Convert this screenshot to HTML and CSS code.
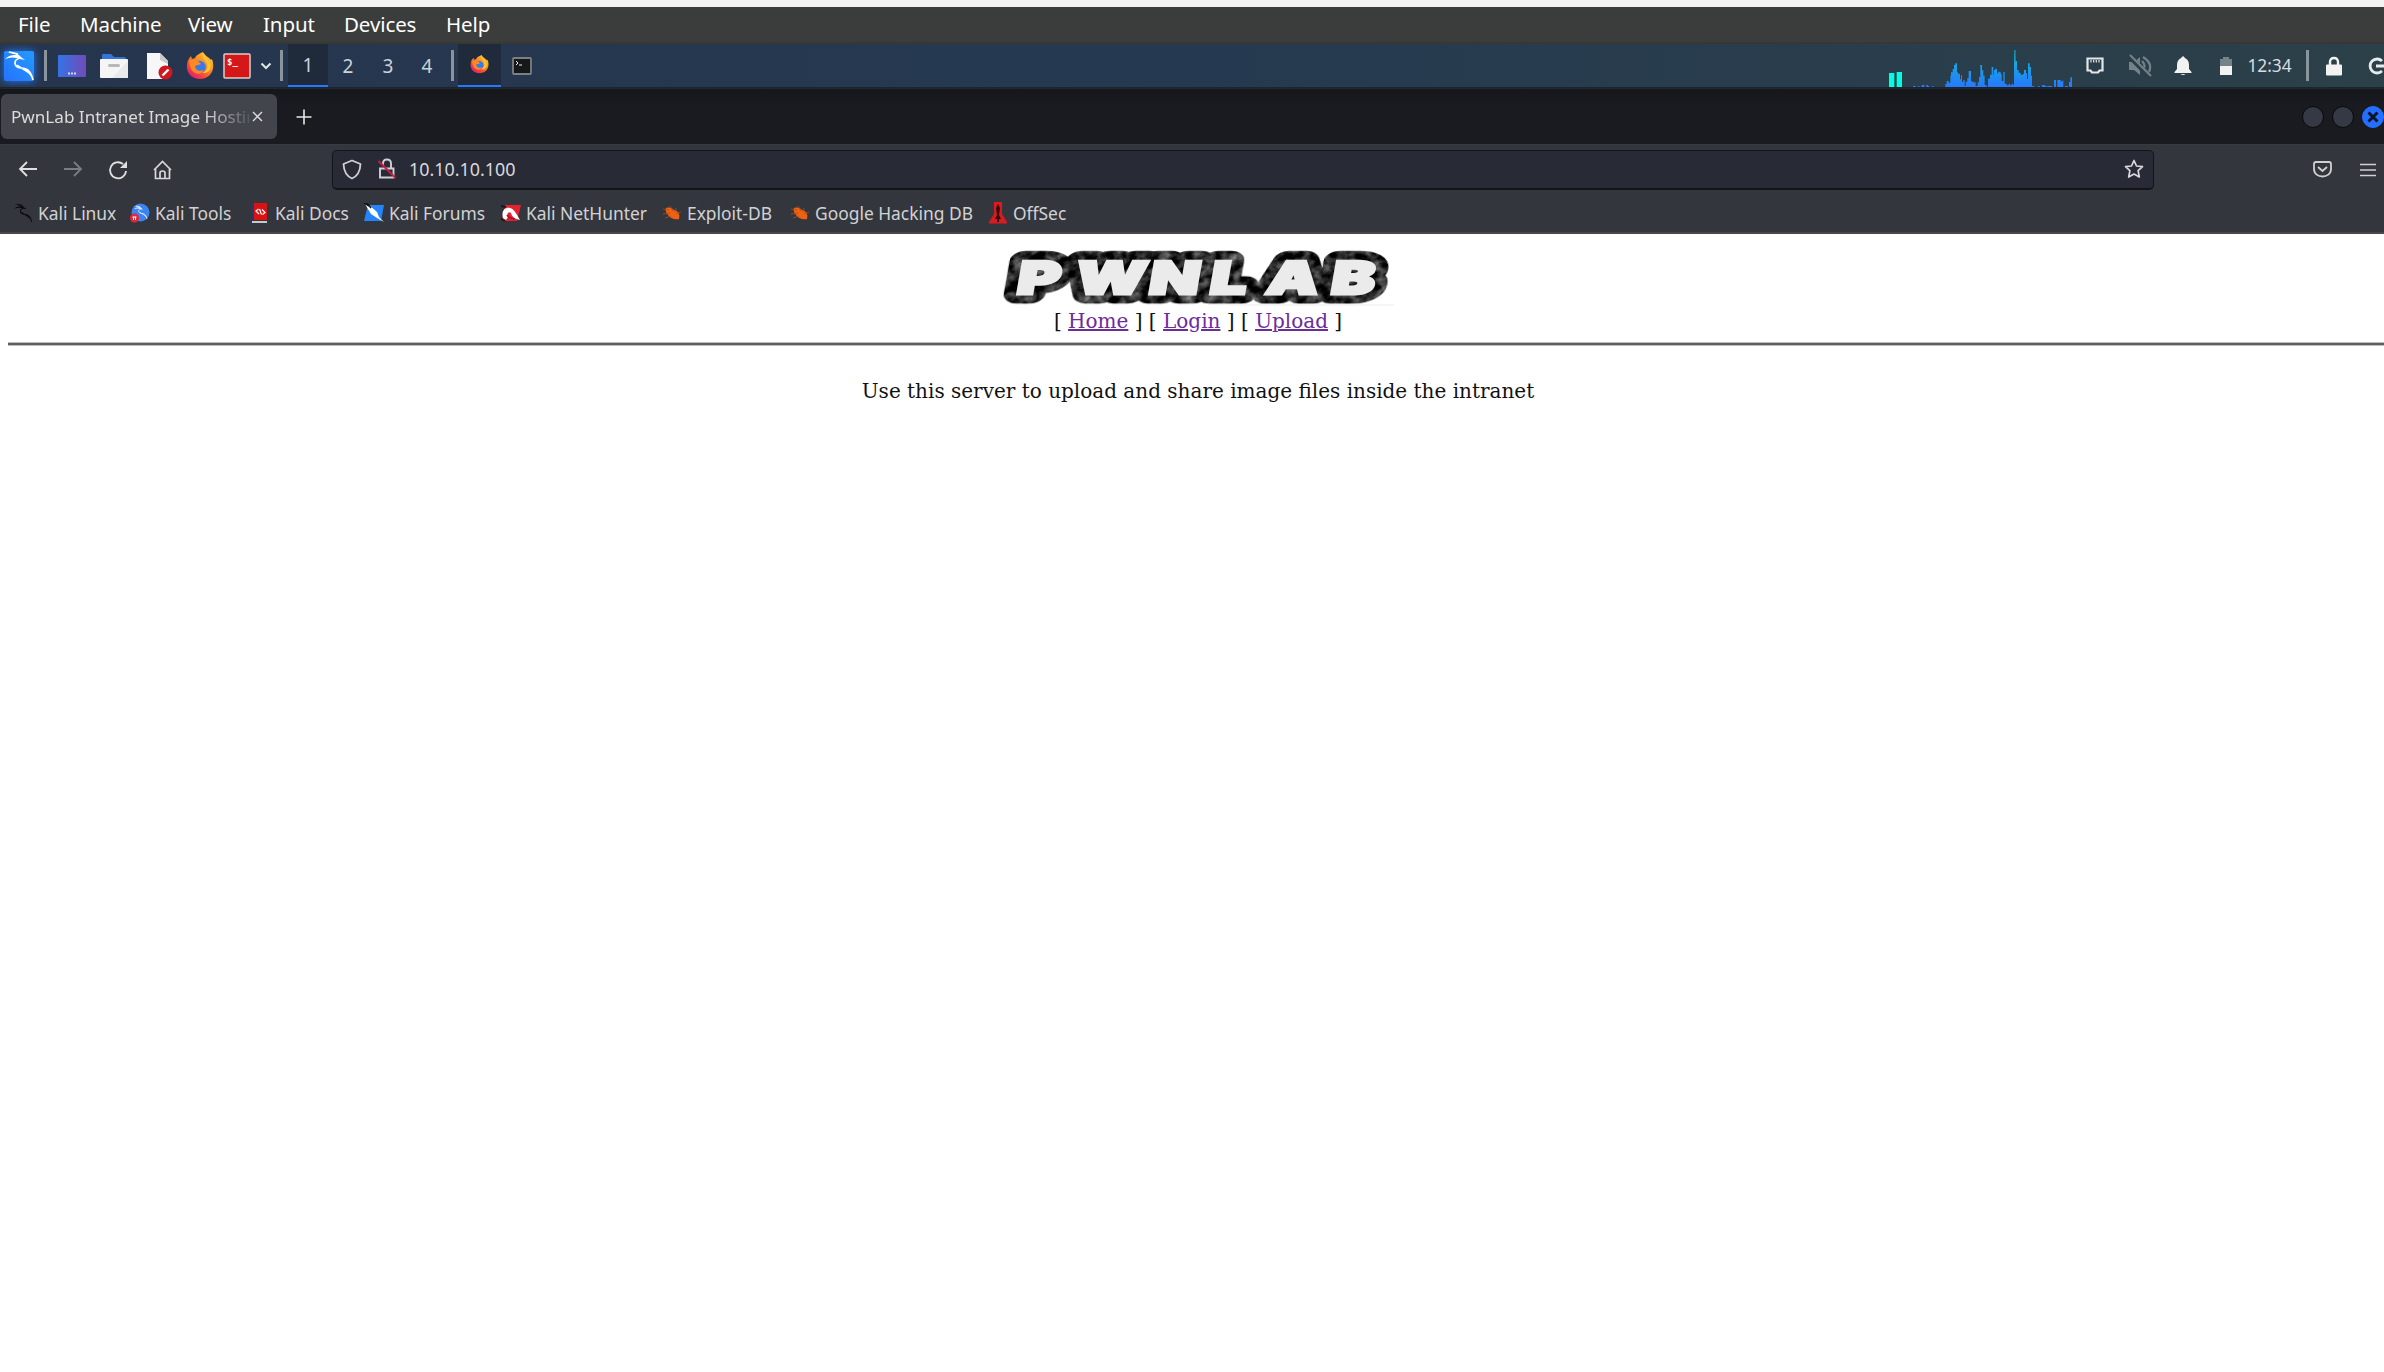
FILE: index.html
```html
<!DOCTYPE html>
<html lang="en">
<head>
<meta charset="utf-8">
<title>PwnLab Intranet Image Hosting</title>
<link rel="stylesheet" href="styles.css">
</head>
<body>
<svg class="defs" width="0" height="0">
  <defs>
    <symbol id="dragon" viewBox="0 0 32 32">
      <path d="M1 3C8 1 15 3 18 7L22 10L17 9C12 7 7 7 2 9C6 5 10 5 14 5C9 3 5 2 1 3Z" fill="currentColor"/>
      <path d="M18 8C10 9 10 17 18 18C25 18 28 22 30 30M14 15C18 19 26 20 29 27M6 2L15 4" fill="none" stroke="currentColor" stroke-width="1.700"/>
    </symbol>
    <linearGradient id="fire" x1="1" y1="0" x2=".2" y2="1"><stop offset="0" stop-color="#ffe53b"/><stop offset=".45" stop-color="#ff8a25"/><stop offset=".8" stop-color="#f23b45"/><stop offset="1" stop-color="#e31587"/></linearGradient>
    <symbol id="firefox" viewBox="0 0 28 28">
      <path d="M17 0C19 4 23 5 25 8L26 7C30 18 24 27 14 27C5 27 0 20 1 13C1 9 3 6 5 4L6 7L9 6C10 3 13 2 17 0Z" fill="url(#fire)"/>
      <circle cx="13.500" cy="15" r="6.200" fill="#3978e8"/>
      <path d="M3 9C7 6 12 8 15 12C13 13 11 13 9 14C9 18 13 20 18 18C14 25 5 21 4 14Z" fill="#ff8a24"/>
      <path d="M17 1C15 7 23 9 21 16C20 19 18 20 16 21C25 22 27 14 22 8Z" fill="#ffc52d"/>
    </symbol>
    <symbol id="bug" viewBox="0 0 20 20">
      <path d="M4 5C8 4 10 5 12 7C17 8 18 12 17 16C12 17 8 15 6 12C4 10 3 7 4 5Z" fill="#f0600f"/>
      <path d="M1 6L7 7M1 11L8 10M3 15L9 13M8 3L11 8M14 5L13 9M19 9L14 11" stroke="#a64e20" stroke-width=".8"/>
    </symbol>
  </defs>
</svg>
<div class="strip"></div>
<nav class="vm-menu"><span>File</span><span>Machine</span><span>View</span><span>Input</span><span>Devices</span><span>Help</span></nav>

<header class="panel">
  <div class="launchers">
    <div><svg class="kali" width="32" height="32" viewBox="0 0 32 32"><defs><linearGradient id="kb" x1="1" y1="0" x2="0" y2="1"><stop stop-color="#249aff"/><stop offset="1" stop-color="#2573ff"/></linearGradient></defs><rect x="1" y="1" width="30" height="30" rx="2" fill="url(#kb)"/><use href="#dragon" width="32" height="32" color="#fff"/></svg></div>
    <div><i class="sep"></i></div>
    <div><svg width="28" height="22"><defs><linearGradient id="mon" x2="1"><stop stop-color="#3573e5"/><stop offset="1" stop-color="#704cb8"/></linearGradient></defs><rect width="28" height="22" rx="1" fill="url(#mon)"/><path d="M10 18.500H18" stroke="#d9d5ef" stroke-width="2" stroke-dasharray="2 1"/></svg></div>
    <div><svg width="28" height="26"><path d="M2 2Q2 1 3 1H11L14 4H24Q26 4 26 6V12H2Z" fill="#3674dc"/><rect y="6" width="28" height="19" rx="1" fill="#f5f5f5"/><path d="M28 8V25H12Z" fill="#e9e9e9"/><rect x="8" y="11" width="12" height="3" rx="1.500" fill="#b8b8b8"/></svg></div>
    <div><svg width="27" height="28"><path d="M1 1H14L22 9V27H1Z" fill="#f7f7f7"/><path d="M14 1V8L22 12V9Z" fill="#c9c9c9"/><circle cx="19.500" cy="20.500" r="7" fill="#cf171d"/><path d="M16.500 23.500L22.500 17.500" stroke="#fff" stroke-width="2.400"/></svg></div>
    <div><svg width="28" height="28"><use href="#firefox" width="28" height="28"/></svg></div>
    <div><svg width="28" height="26"><rect x="1" y="1" width="26" height="24" rx="1" fill="#d51717" stroke="#d8cfcc" stroke-width="1.500"/><text x="4" y="12" class="prompt">$_</text></svg></div>
    <div><svg width="12" height="8" fill="none" stroke="#e3e6e9" stroke-width="2"><path d="M1.500 1.500L6 6L10.500 1.500"/></svg></div>
    <div><i class="sep"></i></div>
    <div class="ws on">1</div><div class="ws">2</div><div class="ws">3</div><div class="ws">4</div>
    <div><i class="sep"></i></div>
    <div class="on"><svg width="19" height="19"><use href="#firefox" width="19" height="19"/></svg></div>
    <div><svg width="20" height="18"><rect x="1" y="1" width="18" height="16" rx="1" fill="#171819" stroke="#7c7f83" stroke-width="1.800"/><path d="M4 4L6 6L4 8M7 8H10" stroke="#eee" fill="none"/></svg></div>
  </div>
  <div class="tray">
    <svg width="192" height="44" viewBox="60 42 576 132"><defs><linearGradient id="cpu" gradientUnits="userSpaceOnUse" x1="0" y1="60" x2="0" y2="174"><stop stop-color="#128e98"/><stop offset=".38" stop-color="#17a5e3"/><stop offset="1" stop-color="#2777ff"/></linearGradient></defs><path d="M87 129H103V174H87ZM110 126H126V174H110Z" fill="#00ffe0"/><path d="M159 174V168H167V174H174V168H178V174H185V165H193V174H199V165H204V168H208V174H216V168H220V174H256V162H260V153H266V158H271V138H273V127H278V117H282V105H286V100H291V127H294V131H300V148H303V136H306V156H310V150H314V168H317V155H322V144H326V123H333V153H337V157H347V168H353V157H357V141H361V105H366V121H370V137H374V165H380V171H384V146H390V134H395V111H400V134H402V120H406V116H411V130H415V125H422V132H425V153H430V126H434V161H440V166H446V161H450V166H455V161H459V165H462V60H467V93H471V120H476V128H482V134H489V131H492V120H498V130H501V147H504V100H509V111H513V137H516V168H523V174H534V168H539V174H546V165H555V168H560V171H562V168H576V174H582V150H588V174H592V150H602V155H605V152H610V171H615V168H624V174H627V156H631V142H636V174Z" fill="url(#cpu)"/></svg>
    <div class="t-net"><svg width="18" height="17" fill="none" stroke="#e3e6e8" stroke-width="2.200"><path d="M1.500 1.500H16.500V13.500H13.500L12 15.500H6L4.500 13.500H1.500Z"/><path d="M5 3V5.500M7.700 3V5.500M10.300 3V5.500M13 3V5.500" stroke-width="1.200"/></svg></div>
    <div class="t-mute"><svg width="24" height="24" fill="none" stroke="#75828a" stroke-width="2.200"><path d="M1 8H6L12 3V21L6 16H1Z" fill="#75828a" stroke="none"/><path d="M14 7Q19 12 14 17M15 3Q25 9 21 18"/><path d="M1 2L22 23" stroke="#2b3d49" stroke-width="5"/><path d="M2 1L23 22"/></svg></div>
    <div class="t-bell"><svg width="18" height="20" fill="#f2f2f0"><path d="M9 0L11 2Q15 4 15 9V13L17.500 16V17H.5V16L3 13V9Q3 4 7 2ZM6.500 18H11.500Q9 20 6.500 18Z"/></svg></div>
    <div class="t-bat"><svg width="14" height="18"><path d="M4 0H10V2H13V9H1V2H4Z" fill="#75828a"/><path d="M1 9H13V18H1Z" fill="#f2f2f0"/></svg></div>
    <div class="clock">12:34</div>
    <div class="t-sep"><i class="sep"></i></div>
    <div class="t-lock"><svg width="18" height="20"><rect x="1" y="8.500" width="16" height="11" rx="1" fill="#f2f2f0"/><path d="M5 9V6Q5 2 9 2T13 6V9" fill="none" stroke="#f2f2f0" stroke-width="2.400"/></svg></div>
    <div class="t-out"><svg width="17" height="20" fill="none" stroke="#e7ebec" stroke-width="2.800"><path d="M15 5A7 7 0 1 0 15 15M9 10H17"/></svg></div>
  </div>
</header>

<div class="tabs">
  <div class="tab"><span class="title">PwnLab Intranet Image Hosting</span><svg width="11" height="11" stroke="#ddd" stroke-width="1.400"><path d="M1 1L10 10M10 1L1 10"/></svg></div>
  <svg class="plus" width="16" height="16" stroke="#e7e7e7" stroke-width="1.600"><path d="M8 .5V15.500M.5 8H15.500"/></svg>
  <div class="win"><i></i><i></i><i class="x"><svg width="12" height="12" stroke="#08152c" stroke-width="3"><path d="M1.500 1.500L10.500 10.500M10.500 1.500L1.500 10.500"/></svg></i></div>
</div>

<div class="toolbar">
  <div class="navs">
    <svg width="20" height="18" fill="none" stroke="#e0e0e1" stroke-width="1.800"><path d="M19 9H2M9 2L2 9L9 16"/></svg>
    <svg width="20" height="18" fill="none" stroke="#7a7c82" stroke-width="1.800"><path d="M1 9H18M11 2L18 9L11 16"/></svg>
    <svg width="20" height="20" fill="none" stroke="#e0e0e1" stroke-width="1.800"><path d="M18 11A8 8 0 1 1 15 4"/><path d="M19 1V8H12Z" fill="#e0e0e1" stroke="none"/></svg>
    <svg width="20" height="20" fill="none" stroke="#d8d8d9" stroke-width="1.700"><path d="M1 10L9.500 1.500L18 10M2.500 9V18.500H16.500V9M7 18V13Q7 11 9.500 11T12 13V18"/></svg>
  </div>
  <div class="url">
    <svg width="20" height="21" fill="none" stroke="#d0d0d4" stroke-width="1.800"><path d="M10 1.500L18.500 5Q18 16 10 19.500Q2 16 1.500 5Z" stroke-linejoin="round"/></svg>
    <svg class="insecure" width="20" height="22" fill="none" stroke="#d0d0d4" stroke-width="1.900"><path d="M6 7V5.500Q6 1.500 10 1.500T14 5.500V10M3 10.500H16.500V19.500H3Z"/><path d="M1.500 3L18.500 20" stroke="#c51d49"/></svg>
    <span>10.10.10.100</span>
    <svg class="star" width="20" height="20" fill="none" stroke="#d8d8da" stroke-width="1.700" stroke-linejoin="round"><path d="M10 1.500L12.500 7L18.500 7.700L14.100 11.700L15.300 18L10 15L4.700 18L5.900 11.700L1.500 7.700L7.500 7Z"/></svg>
  </div>
  <svg class="pocket" width="19" height="17" fill="none" stroke="#d0d0d2" stroke-width="1.800"><path d="M1 3Q1 1 3 1H16Q18 1 18 3V8C18 18 1 18 1 8ZM5 6L9.500 10L14 6"/></svg>
  <svg class="burger" width="16" height="14" stroke="#d0d0d2" stroke-width="1.700"><path d="M0 1.500H16M0 7H16M0 12.500H16"/></svg>
</div>
<div class="bookmarks">
  <a><svg width="20" height="20"><use href="#dragon" width="20" height="20" color="#0b0b0c"/></svg>Kali Linux</a>
  <a><svg width="20" height="20"><circle cx="10.500" cy="9.500" r="9" fill="#3d83f3"/><use href="#dragon" x="3" y="2" width="15" height="15" color="#e7f0ff"/><circle cx="4.500" cy="15" r="4.500" fill="#e32638"/><path d="M2.500 14H6.500M3.500 14V17M5.500 14V17" stroke="#fff"/></svg>Kali Tools</a>
  <a><svg width="20" height="20"><path d="M2 1H4V18H2Z" fill="#27366b"/><path d="M4 0H17V17H4Z" fill="#d91313"/><path d="M2 18H17V20H2Z" fill="#c9c9cb"/><path d="M8.500 6L6 8L9 11M12.500 11.500L15 9.500L12 6.500M9.500 6L11.500 11.500" stroke="#fff" stroke-width="1.200" fill="none"/></svg>Kali Docs</a>
  <a><svg width="20" height="20"><path d="M4 2H20L17 18H0Z" fill="#2384fb"/><path d="M1 1L5 2L13 9L15 14L20 19L13 15L7 11Z" fill="#fff"/><path d="M0 0L5 3M3 0L7 5" stroke="#111" stroke-width="1.500"/></svg>Kali Forums</a>
  <a><svg width="20" height="20" fill="none"><path d="M4 2H20L16 18H1Z" fill="#e32332"/><path d="M2 15C0 8 4 4 9 5C13 6 15 10 19 17C14 16 11 14 10 10C8 8 5 11 7 14L5 17Z" fill="#fff"/><path d="M6 12C8 15 11 16 14 16" stroke="#a70d2c" stroke-width="1.500"/><path d="M0 3L5 4M0 16L4 18" stroke="#17171a" stroke-width="1.800"/></svg>Kali NetHunter</a>
  <a><svg width="20" height="20"><use href="#bug" width="20" height="20"/></svg>Exploit-DB</a>
  <a><svg width="20" height="20"><use href="#bug" width="20" height="20"/></svg>Google Hacking DB</a>
  <a><svg width="19" height="22"><path d="M5 0H13V12L18 20V21.500H0V20L5 12Z" fill="#d91a20"/><path d="M9 2L11 6L10 13L12 17H10V20H8V17H6L8 13L7 6Z" fill="#330b0c"/></svg>OffSec</a>
</div>

<main class="page">
  <svg class="logo" width="400" height="58" viewBox="0 0 400 58">
    <defs>
      <filter id="marble" x="-5%" y="-30%" width="110%" height="160%" color-interpolation-filters="sRGB">
        <feTurbulence type="fractalNoise" baseFrequency=".13 .1" numOctaves="4" seed="7"/>
        <feColorMatrix values="1 0 0 0 -.35 1 0 0 0 -.35 1 0 0 0 -.35 0 0 0 0 1"/>
        <feComposite operator="in" in2="SourceGraphic"/>
      </filter>
    </defs>
    <g transform="translate(10 44.500) skewX(-10) scale(1.450 1)">
      <text x="5 45 96 138 177 221.500" class="rim" filter="url(#marble)">PWNLAB</text>
      <text x="5 45 96 138 177 221.500" class="face" aria-hidden="true">PWNLAB</text>
    </g>
    <path d="M230 56H396" stroke="#f3f3f3" stroke-width="1.500"/>
  </svg>
  <div class="links">[ <a>Home</a> ] [ <a>Login</a> ] [ <a>Upload</a> ]</div>
  <hr>
  <p>Use this server to upload and share image files inside the intranet</p>
</main>
</body>
</html>
```

FILE: styles.css
```css
* { box-sizing: border-box; }
html, body { margin: 0; height: 100%; overflow: hidden; }
body { background: #fff; font-family: "Noto Sans", sans-serif; display: flex; flex-direction: column; }
svg { display: block; flex: none; }
.defs { position: absolute; }
.strip { height: 7px; background: #f3f3f3; flex: none; }

.vm-menu { height: 37px; flex: none; display: grid; grid-template-columns: 62px 108px 75px 81px 102px 80px; align-items: center; padding: 0 0 1px 18px; background: #3b3c3c; border-bottom: 2px solid #373735; color: #fff; font-size: 20.500px; letter-spacing: -.1px; white-space: nowrap; }

.panel { height: 44px; flex: none; display: flex; justify-content: space-between; background: linear-gradient(90deg, #26354e, #253a50 50%, #2c4049); border-bottom: 1px solid #1b252f; overflow: hidden; }
.launchers { display: grid; grid-template-columns: 38px 15px 38px 46px 44px 37px 38px 19px 13px 40px 40px 40px 38px 12px 43px 41px; }
.launchers > div, .tray > div { display: flex; align-items: center; justify-content: center; }
.kali { filter: drop-shadow(0 0 4px #1e7bff); }
.sep { width: 3px; height: 31px; background: #8b949d; }
.ws { color: #cbd3da; font-size: 19px; }
.launchers > .on { background: #1f2b3b; border-bottom: 2px solid #2777ff; }
.prompt { font: bold 9px "DejaVu Sans Mono", monospace; fill: #fff; }
.tray { display: flex; }
.t-net { width: 46px; }
.t-mute { width: 44px; }
.t-bell { width: 42px; }
.t-bat { width: 43px; }
.clock { width: 47px; padding-right: 2px; color: #d8dde0; font-size: 17.300px; }
.t-sep { width: 27px; }
.t-lock { width: 26px; }
.t-out { width: 37px; }
.tray > .t-out { justify-content: flex-end; }

.tabs { height: 56px; flex: none; display: flex; align-items: center; background: linear-gradient(#15171b, #1a1b20 30%); border-top: 1px solid #23272e; }
.tab { width: 276px; height: 45px; margin-left: 1px; padding: 0 14px 0 10px; display: flex; align-items: center; justify-content: space-between; border-radius: 6px; background: #43454c; color: #dcdcdd; }
.title { width: 238px; overflow: hidden; white-space: nowrap; font-size: 17.100px; -webkit-mask-image: linear-gradient(90deg, #000 192px, transparent 245px); mask-image: linear-gradient(90deg, #000 192px, transparent 245px); }
.plus { margin-left: 19px; }
.win { margin-left: auto; display: flex; gap: 8px; }
.win i { width: 22px; height: 22px; border-radius: 50%; background: #353945; border: 1px solid #08090b; display: flex; align-items: center; justify-content: center; }
.win .x { background: #246fff; border-color: #246fff; }

.toolbar { height: 50px; flex: none; display: flex; align-items: center; background: #34363e; border-top: 1px solid #393b42; color: #d9d9dc; }
.navs { width: 332px; display: flex; gap: 25px; padding-left: 18px; }
.url { width: 1822px; height: 40px; display: flex; align-items: center; padding: 0 9px; border: 1px solid #131419; border-bottom-width: 2px; border-radius: 5px; background: #282a36; font-size: 17.900px; }
.insecure { margin: 0 12px 0 15px; }
.star { margin-left: auto; }
.pocket { margin-left: 159px; }
.burger { margin-left: 28px; }

.bookmarks { height: 40px; flex: none; padding: 0 0 0 13px; display: grid; grid-template-columns: 117px 120px 114px 137px 161px 128px 199px 100px; align-items: center; background: #34363e; border-bottom: 2px solid #49474c; color: #d2d2d4; font-size: 17.400px; white-space: nowrap; }
.bookmarks a { display: flex; align-items: center; gap: 5px; }

.page { width: 2396px; flex: 1; padding: 0 8px; display: flex; flex-direction: column; align-items: center; font-family: "DejaVu Serif", serif; color: #111; font-size: 20px; }
.logo { margin-top: 15px; }
.logo text { font: 900 45px Inter, sans-serif; }
.logo .rim { stroke: #111; stroke-width: 20px; stroke-linejoin: round; fill: #111; }
.logo .face { fill: #ebebeb; stroke: #ebebeb; stroke-width: 3px; }
.links { height: 35px; line-height: 28px; white-space: pre; }
.links a { color: #6b2c9c; text-decoration: underline; }
hr { width: 100%; height: 4px; margin: 0; border: 1px solid #bdbdbd; border-width: 1px 0; background: #5f5f5f; }
p { margin: 33px 0 0; line-height: 25px; }
```
